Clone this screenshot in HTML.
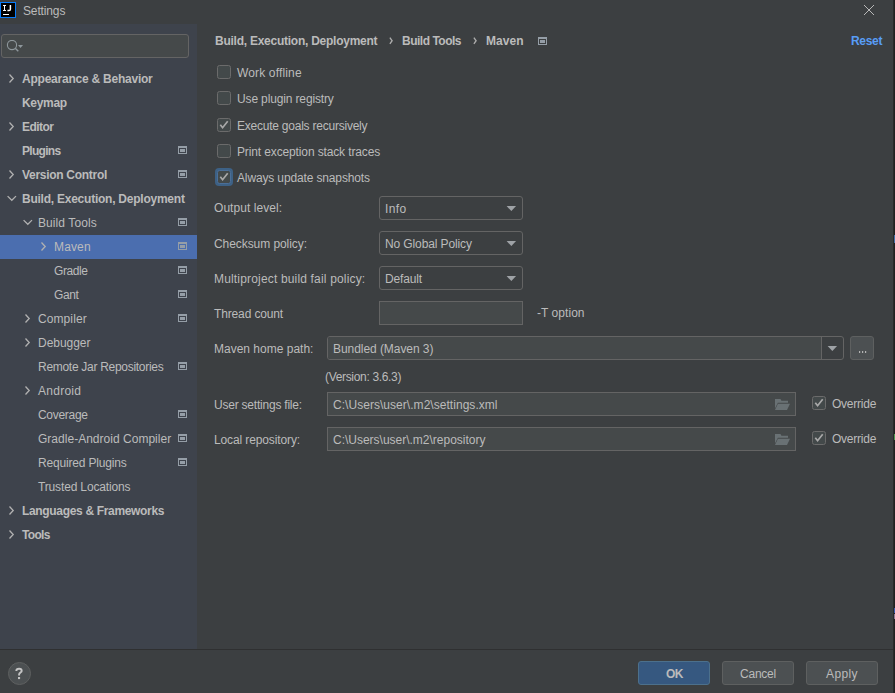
<!DOCTYPE html>
<html><head><meta charset="utf-8">
<style>
*{margin:0;padding:0;box-sizing:border-box}
html,body{width:895px;height:693px;overflow:hidden;background:#212121}
body{position:relative;font-family:"Liberation Sans",sans-serif;font-size:12px;color:#bbbbbb}
.a{position:absolute}
.t{position:absolute;white-space:nowrap;font-size:12px;line-height:14px}
.b{font-weight:bold;letter-spacing:-0.25px}
#dlg{position:absolute;left:0;top:0;width:893px;height:693px;background:#3c3f41;overflow:hidden}
#side{position:absolute;left:0;top:24px;width:197px;height:625px;background:#3e434c}
.cb{position:absolute;width:14px;height:14px;border:1px solid #6b6b6b;border-radius:2.5px;background:#43494a}
.cmb{position:absolute;height:24px;border:1px solid #646464;border-radius:3px;background:#3c3f41}
.fld{position:absolute;height:24px;border:1px solid #646464;background:#45494a}
.btn{position:absolute;height:24px;border:1px solid #5e6060;border-radius:3px;background:#4c5052;text-align:center;line-height:24px}
.ic{position:absolute;width:10px;height:9px}
</style></head><body>
<div id="dlg">
  <!-- title bar -->
  <svg class="a" style="left:0;top:2px" width="16" height="16" viewBox="0 0 16 16">
    <rect x="0.5" y="0.5" width="15" height="15" fill="#000" stroke="#087cfa"/>
    <rect x="3" y="3" width="3" height="1" fill="#fff"/>
    <rect x="4" y="3" width="1" height="6" fill="#fff"/>
    <rect x="3" y="8" width="3" height="1" fill="#fff"/>
    <path d="M10.4 3V7.3Q10.4 8.6 9.1 8.6H7.4" fill="none" stroke="#fff" stroke-width="1.5"/>
    <rect x="3" y="12" width="6" height="1" fill="#fff"/>
  </svg>
  <div class="t" style="left:23px;top:4px;color:#bbbbbb;letter-spacing:-0.14px">Settings</div>
  <svg class="a" style="left:863px;top:4px" width="12" height="12" viewBox="0 0 12 12">
    <path d="M1 1L11 11M11 1L1 11" stroke="#b8b8b8" stroke-width="1"/>
  </svg>

  <!-- sidebar -->
  <div id="side">
    <div class="a" style="left:1px;top:10px;width:188px;height:24px;border:1px solid #646464;border-radius:3px;background:#45494a"></div>
    <svg class="a" style="left:6px;top:16px" width="20" height="12" viewBox="0 0 20 12">
      <circle cx="6" cy="5" r="4.6" fill="none" stroke="#8e979c" stroke-width="1.1"/>
      <path d="M9.2 8.2L12.3 11.3" stroke="#8e979c" stroke-width="1.4"/>
      <path d="M12 5h5l-2.5 3z" fill="#8e979c"/>
    </svg>
  </div>
  <div id="tree">
<svg class="a" style="left:8px;top:73px" width="7" height="11" viewBox="0 0 7 11"><path d="M1.5 1.5L5.2 5.5L1.5 9.5" fill="none" stroke="#b1b1b1" stroke-width="1.3"/></svg>
<div class="t b" style="left:22px;top:72px;letter-spacing:-0.23px">Appearance &amp; Behavior</div>
<div class="t b" style="left:22px;top:96px;letter-spacing:-0.31px">Keymap</div>
<svg class="a" style="left:8px;top:121px" width="7" height="11" viewBox="0 0 7 11"><path d="M1.5 1.5L5.2 5.5L1.5 9.5" fill="none" stroke="#b1b1b1" stroke-width="1.3"/></svg>
<div class="t b" style="left:22px;top:120px;letter-spacing:-0.57px">Editor</div>
<div class="t b" style="left:22px;top:144px;letter-spacing:-0.70px">Plugins</div>
<svg class="a" style="left:178px;top:146px" width="9" height="8" viewBox="0 0 9 8" fill="#959ea7"><rect width="9" height="2"/><rect width="1" height="8"/><rect x="8" width="1" height="8"/><rect y="7" width="9" height="1"/><rect x="2" y="3" width="5" height="3"/></svg>
<svg class="a" style="left:8px;top:169px" width="7" height="11" viewBox="0 0 7 11"><path d="M1.5 1.5L5.2 5.5L1.5 9.5" fill="none" stroke="#b1b1b1" stroke-width="1.3"/></svg>
<div class="t b" style="left:22px;top:168px;letter-spacing:-0.29px">Version Control</div>
<svg class="a" style="left:178px;top:170px" width="9" height="8" viewBox="0 0 9 8" fill="#959ea7"><rect width="9" height="2"/><rect width="1" height="8"/><rect x="8" width="1" height="8"/><rect y="7" width="9" height="1"/><rect x="2" y="3" width="5" height="3"/></svg>
<svg class="a" style="left:7px;top:195px" width="10" height="7" viewBox="0 0 10 7"><path d="M0.6 1.1L4.8 5.3L9 1.1" fill="none" stroke="#b1b1b1" stroke-width="1.3"/></svg>
<div class="t b" style="left:22px;top:192px;letter-spacing:-0.24px">Build, Execution, Deployment</div>
<svg class="a" style="left:23px;top:219px" width="10" height="7" viewBox="0 0 10 7"><path d="M0.6 1.1L4.8 5.3L9 1.1" fill="none" stroke="#b1b1b1" stroke-width="1.3"/></svg>
<div class="t" style="left:38px;top:216px;letter-spacing:0.09px">Build Tools</div>
<svg class="a" style="left:178px;top:218px" width="9" height="8" viewBox="0 0 9 8" fill="#959ea7"><rect width="9" height="2"/><rect width="1" height="8"/><rect x="8" width="1" height="8"/><rect y="7" width="9" height="1"/><rect x="2" y="3" width="5" height="3"/></svg>
<div class="a" style="left:0;top:235px;width:197px;height:24px;background:#4b6eaf"></div>
<svg class="a" style="left:40px;top:241px" width="7" height="11" viewBox="0 0 7 11"><path d="M1.5 1.5L5.2 5.5L1.5 9.5" fill="none" stroke="#b1b1b1" stroke-width="1.3"/></svg>
<div class="t" style="left:54px;top:240px;letter-spacing:0.15px">Maven</div>
<svg class="a" style="left:178px;top:242px" width="9" height="8" viewBox="0 0 9 8" fill="#959ea7"><rect width="9" height="2"/><rect width="1" height="8"/><rect x="8" width="1" height="8"/><rect y="7" width="9" height="1"/><rect x="2" y="3" width="5" height="3"/></svg>
<div class="t" style="left:54px;top:264px;letter-spacing:-0.44px">Gradle</div>
<svg class="a" style="left:178px;top:266px" width="9" height="8" viewBox="0 0 9 8" fill="#959ea7"><rect width="9" height="2"/><rect width="1" height="8"/><rect x="8" width="1" height="8"/><rect y="7" width="9" height="1"/><rect x="2" y="3" width="5" height="3"/></svg>
<div class="t" style="left:54px;top:288px;letter-spacing:-0.37px">Gant</div>
<svg class="a" style="left:178px;top:290px" width="9" height="8" viewBox="0 0 9 8" fill="#959ea7"><rect width="9" height="2"/><rect width="1" height="8"/><rect x="8" width="1" height="8"/><rect y="7" width="9" height="1"/><rect x="2" y="3" width="5" height="3"/></svg>
<svg class="a" style="left:24px;top:313px" width="7" height="11" viewBox="0 0 7 11"><path d="M1.5 1.5L5.2 5.5L1.5 9.5" fill="none" stroke="#b1b1b1" stroke-width="1.3"/></svg>
<div class="t" style="left:38px;top:312px;letter-spacing:0.09px">Compiler</div>
<svg class="a" style="left:178px;top:314px" width="9" height="8" viewBox="0 0 9 8" fill="#959ea7"><rect width="9" height="2"/><rect width="1" height="8"/><rect x="8" width="1" height="8"/><rect y="7" width="9" height="1"/><rect x="2" y="3" width="5" height="3"/></svg>
<svg class="a" style="left:24px;top:337px" width="7" height="11" viewBox="0 0 7 11"><path d="M1.5 1.5L5.2 5.5L1.5 9.5" fill="none" stroke="#b1b1b1" stroke-width="1.3"/></svg>
<div class="t" style="left:38px;top:336px;letter-spacing:-0.04px">Debugger</div>
<div class="t" style="left:38px;top:360px;letter-spacing:-0.29px">Remote Jar Repositories</div>
<svg class="a" style="left:178px;top:362px" width="9" height="8" viewBox="0 0 9 8" fill="#959ea7"><rect width="9" height="2"/><rect width="1" height="8"/><rect x="8" width="1" height="8"/><rect y="7" width="9" height="1"/><rect x="2" y="3" width="5" height="3"/></svg>
<svg class="a" style="left:24px;top:385px" width="7" height="11" viewBox="0 0 7 11"><path d="M1.5 1.5L5.2 5.5L1.5 9.5" fill="none" stroke="#b1b1b1" stroke-width="1.3"/></svg>
<div class="t" style="left:38px;top:384px;letter-spacing:0.27px">Android</div>
<div class="t" style="left:38px;top:408px;letter-spacing:-0.30px">Coverage</div>
<svg class="a" style="left:178px;top:410px" width="9" height="8" viewBox="0 0 9 8" fill="#959ea7"><rect width="9" height="2"/><rect width="1" height="8"/><rect x="8" width="1" height="8"/><rect y="7" width="9" height="1"/><rect x="2" y="3" width="5" height="3"/></svg>
<div class="t" style="left:38px;top:432px;letter-spacing:0.02px">Gradle-Android Compiler</div>
<svg class="a" style="left:178px;top:434px" width="9" height="8" viewBox="0 0 9 8" fill="#959ea7"><rect width="9" height="2"/><rect width="1" height="8"/><rect x="8" width="1" height="8"/><rect y="7" width="9" height="1"/><rect x="2" y="3" width="5" height="3"/></svg>
<div class="t" style="left:38px;top:456px;letter-spacing:-0.18px">Required Plugins</div>
<svg class="a" style="left:178px;top:458px" width="9" height="8" viewBox="0 0 9 8" fill="#959ea7"><rect width="9" height="2"/><rect width="1" height="8"/><rect x="8" width="1" height="8"/><rect y="7" width="9" height="1"/><rect x="2" y="3" width="5" height="3"/></svg>
<div class="t" style="left:38px;top:480px;letter-spacing:-0.15px">Trusted Locations</div>
<svg class="a" style="left:8px;top:505px" width="7" height="11" viewBox="0 0 7 11"><path d="M1.5 1.5L5.2 5.5L1.5 9.5" fill="none" stroke="#b1b1b1" stroke-width="1.3"/></svg>
<div class="t b" style="left:22px;top:504px;letter-spacing:-0.33px">Languages &amp; Frameworks</div>
<svg class="a" style="left:8px;top:529px" width="7" height="11" viewBox="0 0 7 11"><path d="M1.5 1.5L5.2 5.5L1.5 9.5" fill="none" stroke="#b1b1b1" stroke-width="1.3"/></svg>
<div class="t b" style="left:22px;top:528px;letter-spacing:-0.68px">Tools</div>
</div><!--/tree-->

  <!-- main panel -->
  <div class="t b" style="left:215px;top:34px;letter-spacing:-0.25px">Build, Execution, Deployment</div>
  <svg class="a" style="left:388px;top:37px" width="6" height="8" viewBox="0 0 6 8"><path d="M1.9 0.6L4.1 3.75L1.9 6.9" fill="none" stroke="#acacac" stroke-width="1.35"/></svg>
  <div class="t b" style="left:402px;top:34px;letter-spacing:-0.49px">Build Tools</div>
  <svg class="a" style="left:472px;top:37px" width="6" height="8" viewBox="0 0 6 8"><path d="M1.9 0.6L4.1 3.75L1.9 6.9" fill="none" stroke="#acacac" stroke-width="1.35"/></svg>
  <div class="t b" style="left:486px;top:34px;letter-spacing:0.05px">Maven</div>
  <svg class="a" style="left:538px;top:37px" width="9" height="8" viewBox="0 0 9 8" fill="#959ea7"><rect width="9" height="2"/><rect width="1" height="8"/><rect x="8" width="1" height="8"/><rect y="7" width="9" height="1"/><rect x="2" y="3" width="5" height="3"/></svg>
  <div class="t b" style="left:851px;top:34px;color:#589df6;letter-spacing:-0.3px">Reset</div>

  <!-- checkboxes -->
  <div class="cb" style="left:217px;top:65px"></div>
  <div class="t" style="left:237px;top:66px;letter-spacing:0.15px">Work offline</div>
  <div class="cb" style="left:217px;top:91px"></div>
  <div class="t" style="left:237px;top:92px;letter-spacing:-0.14px">Use plugin registry</div>
  <div class="cb" style="left:217px;top:118px"></div>
  <svg class="a" style="left:217px;top:118px" width="14" height="14" viewBox="0 0 14 14"><path d="M3.3 6.7L5.6 9.7L10.7 3.2" fill="none" stroke="#a9a9a9" stroke-width="1.7"/></svg>
  <div class="t" style="left:237px;top:119px;letter-spacing:-0.23px">Execute goals recursively</div>
  <div class="cb" style="left:217px;top:144px"></div>
  <div class="t" style="left:237px;top:145px;letter-spacing:-0.13px">Print exception stack traces</div>
  <div class="a" style="left:215px;top:168px;width:18px;height:18px;border-radius:4px;background:#3d6185"></div>
  <div class="cb" style="left:217px;top:170px;border-color:#4b6f98"></div>
  <svg class="a" style="left:217px;top:170px" width="14" height="14" viewBox="0 0 14 14"><path d="M3.3 6.7L5.6 9.7L10.7 3.2" fill="none" stroke="#a9a9a9" stroke-width="1.7"/></svg>
  <div class="t" style="left:237px;top:171px;letter-spacing:-0.14px">Always update snapshots</div>

  <!-- combos -->
  <div class="t" style="left:214px;top:201px;letter-spacing:0.05px">Output level:</div>
  <div class="cmb" style="left:379px;top:196px;width:144px"></div>
  <div class="t" style="left:385px;top:202px;letter-spacing:0.40px">Info</div>
  <svg class="a" style="left:506px;top:205px" width="11" height="7" viewBox="0 0 11 7"><path d="M0.6 1H10.1L5.35 6.1z" fill="#9ea2a6"/></svg>

  <div class="t" style="left:214px;top:237px;letter-spacing:-0.07px">Checksum policy:</div>
  <div class="cmb" style="left:379px;top:231px;width:144px"></div>
  <div class="t" style="left:385px;top:237px;letter-spacing:-0.12px">No Global Policy</div>
  <svg class="a" style="left:506px;top:240px" width="11" height="7" viewBox="0 0 11 7"><path d="M0.6 1H10.1L5.35 6.1z" fill="#9ea2a6"/></svg>

  <div class="t" style="left:214px;top:272px;letter-spacing:0.17px">Multiproject build fail policy:</div>
  <div class="cmb" style="left:379px;top:266px;width:144px"></div>
  <div class="t" style="left:385px;top:272px;letter-spacing:-0.15px">Default</div>
  <svg class="a" style="left:506px;top:275px" width="11" height="7" viewBox="0 0 11 7"><path d="M0.6 1H10.1L5.35 6.1z" fill="#9ea2a6"/></svg>

  <div class="t" style="left:214px;top:307px;letter-spacing:-0.14px">Thread count</div>
  <div class="fld" style="left:379px;top:301px;width:144px"></div>
  <div class="t" style="left:537px;top:306px;letter-spacing:0.05px">-T option</div>

  <div class="t" style="left:214px;top:342px;letter-spacing:0.00px">Maven home path:</div>
  <div class="cmb" style="left:327px;top:336px;width:517px;overflow:hidden">
    <div class="a" style="left:0;top:0;width:494px;height:22px;background:#45494a;border-right:1px solid #646464"></div>
  </div>
  <div class="t" style="left:333px;top:342px;letter-spacing:-0.06px">Bundled (Maven 3)</div>
  <svg class="a" style="left:827px;top:345px" width="11" height="7" viewBox="0 0 11 7"><path d="M0.6 1H10.1L5.35 6.1z" fill="#9ea2a6"/></svg>
  <div class="btn" style="left:850px;top:336px;width:24px"></div>
  <svg class="a" style="left:858px;top:350px" width="10" height="4" viewBox="0 0 10 4" fill="#b4b4b4"><rect x="1" y="1" width="1.2" height="2"/><rect x="4" y="1" width="1.2" height="2"/><rect x="7" y="1" width="1.2" height="2"/></svg>

  <div class="t" style="left:325px;top:370px;letter-spacing:-0.33px">(Version: 3.6.3)</div>

  <div class="t" style="left:214px;top:398px;letter-spacing:-0.22px">User settings file:</div>
  <div class="fld" style="left:327px;top:392px;width:469px"></div>
  <div class="t" style="left:333px;top:398px;letter-spacing:0.04px">C:\Users\user\.m2\settings.xml</div>
  <svg class="a" style="left:775px;top:398px" width="16" height="12" viewBox="0 0 16 12"><path d="M0 1H5.5L6.4 2.8H13V4.8H2.9L0 10.5z" fill="#697174"/><path d="M2.9 5.8H15L12 11.9H0z" fill="#697174"/></svg>
  <div class="cb" style="left:812px;top:396px"></div>
  <svg class="a" style="left:812px;top:396px" width="14" height="14" viewBox="0 0 14 14"><path d="M3.3 6.7L5.6 9.7L10.7 3.2" fill="none" stroke="#a9a9a9" stroke-width="1.7"/></svg>
  <div class="t" style="left:832px;top:397px;letter-spacing:-0.23px">Override</div>

  <div class="t" style="left:214px;top:433px;letter-spacing:-0.12px">Local repository:</div>
  <div class="fld" style="left:327px;top:427px;width:469px"></div>
  <div class="t" style="left:333px;top:433px;letter-spacing:-0.01px">C:\Users\user\.m2\repository</div>
  <svg class="a" style="left:775px;top:433px" width="16" height="12" viewBox="0 0 16 12"><path d="M0 1H5.5L6.4 2.8H13V4.8H2.9L0 10.5z" fill="#697174"/><path d="M2.9 5.8H15L12 11.9H0z" fill="#697174"/></svg>
  <div class="cb" style="left:812px;top:431px"></div>
  <svg class="a" style="left:812px;top:431px" width="14" height="14" viewBox="0 0 14 14"><path d="M3.3 6.7L5.6 9.7L10.7 3.2" fill="none" stroke="#a9a9a9" stroke-width="1.7"/></svg>
  <div class="t" style="left:832px;top:432px;letter-spacing:-0.23px">Override</div>

  <!-- bottom -->
  <div class="a" style="left:0;top:649px;width:893px;height:1px;background:#2f3031"></div>
  <div class="a" style="left:8px;top:662px;width:23px;height:23px;border-radius:50%;border:1px solid #5e6060;background:#4c5052"></div>
  <svg class="a" style="left:8px;top:661px" width="24" height="24" viewBox="0 0 24 24"><path d="M8.3 10C8.3 8.6 9.6 7.8 11.1 7.8C12.6 7.8 13.7 8.7 13.7 9.9C13.7 11.4 11.1 11.8 11.1 13.5V14.4" fill="none" stroke="#c4c4c4" stroke-width="1.9"/><rect x="10" y="16" width="2.1" height="2.1" fill="#c4c4c4"/></svg>
  <div class="btn b" style="left:638px;top:661px;width:72px;background:#365880;border-color:#4c708c;letter-spacing:-0.5px;text-indent:1px">OK</div>
  <div class="btn" style="left:722px;top:661px;width:72px;letter-spacing:-0.26px">Cancel</div>
  <div class="btn" style="left:806px;top:661px;width:72px;letter-spacing:0.4px">Apply</div>
</div>
<div class="a" style="left:893px;top:0;width:1px;height:693px;background:#2a2a2a"></div>
<div class="a" style="left:894px;top:235px;width:1px;height:8px;background:#4570a6"></div>
<div class="a" style="left:894px;top:434px;width:1px;height:6px;background:#4f9a52"></div>
<div class="a" style="left:894px;top:608px;width:1px;height:5px;background:#3b58a8"></div>
<div class="a" style="left:894px;top:614px;width:1px;height:5px;background:#8d7790"></div>
</body></html>
